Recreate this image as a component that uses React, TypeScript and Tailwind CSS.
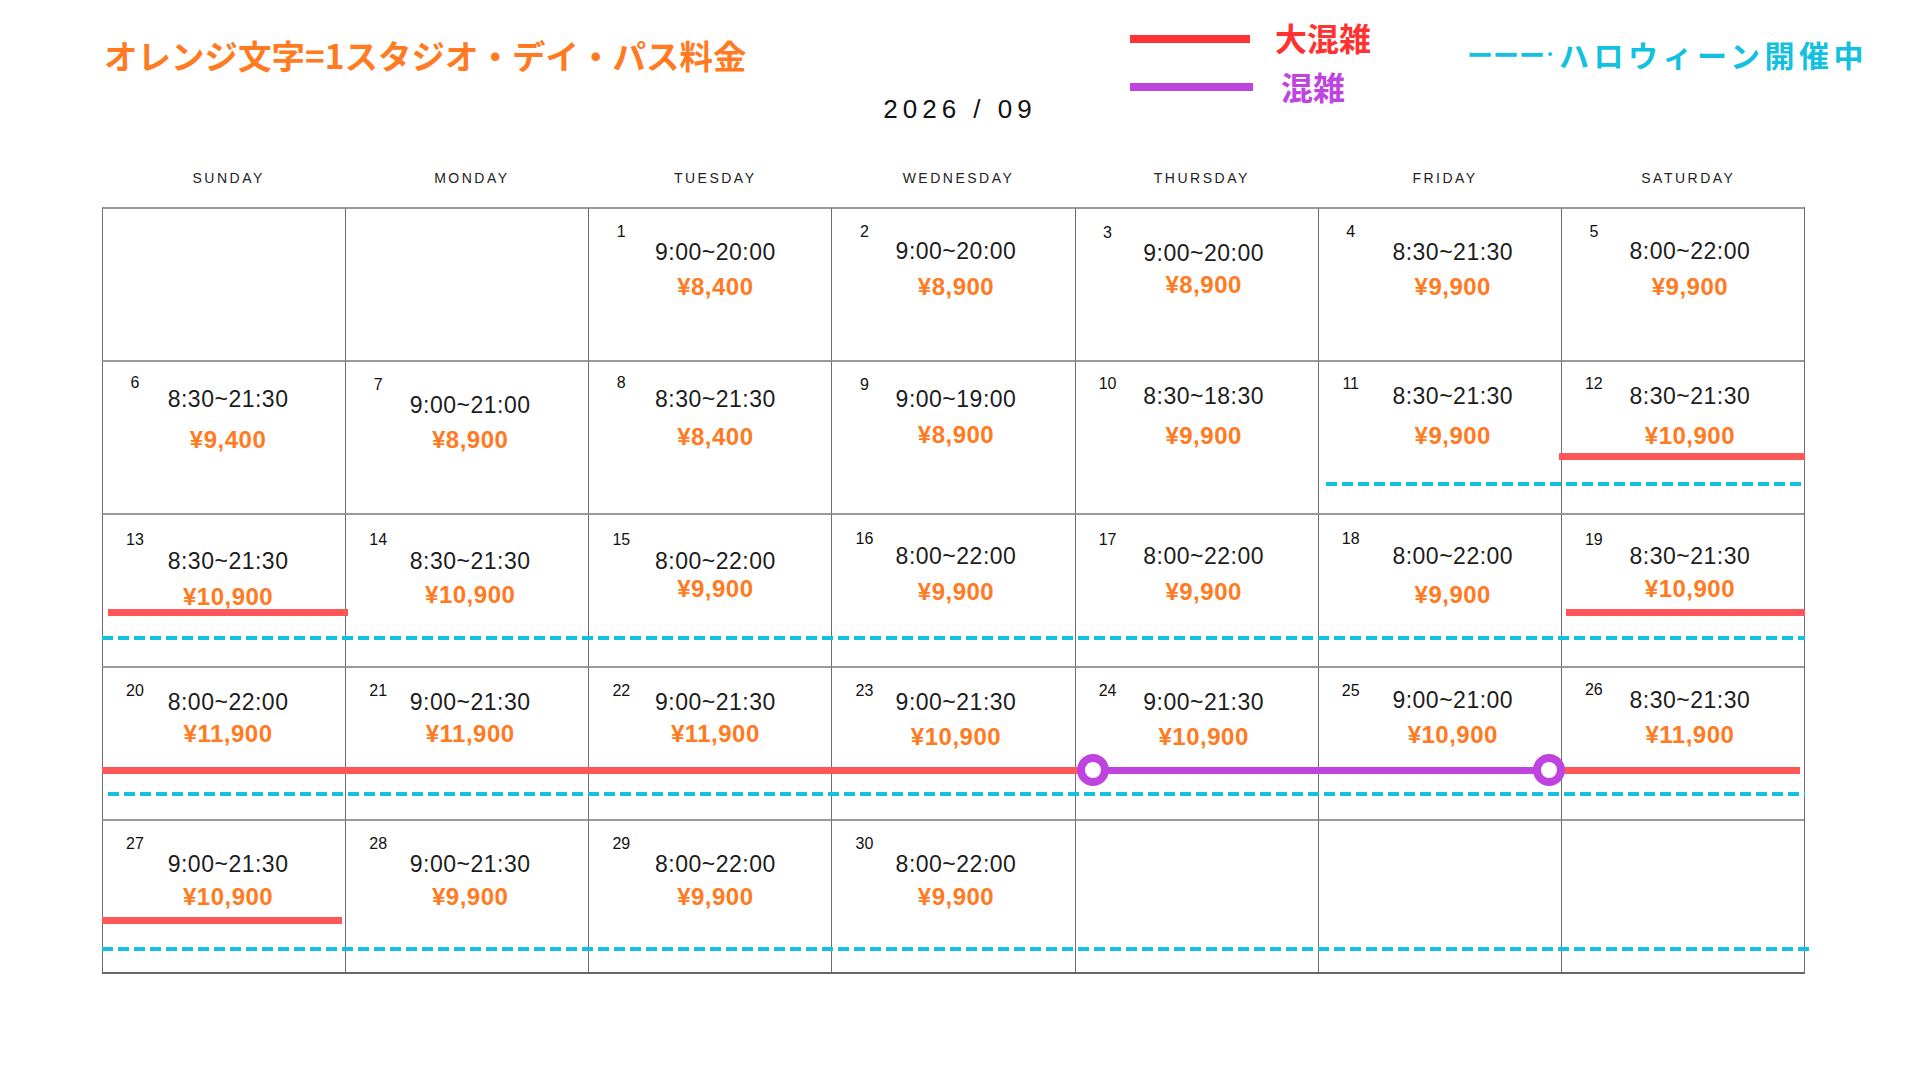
type Day = {
  d: number;
  time: string;
  price: string;
  pt: string;
  tm: string;
  pm: string;
};

const mk = (d: number, time: string, price: string, pt: string, tm: string, pm: string): Day => ({
  d,
  time,
  price,
  pt,
  tm,
  pm,
});

const weeks: (Day | null)[][] = [
  [
    null,
    null,
    mk(1, '9:00~20:00', '¥8,400', 'pt-[16px]', 'mt-[3px]', 'mt-[11px]'),
    mk(2, '9:00~20:00', '¥8,900', 'pt-[16px]', 'mt-[2px]', 'mt-[12px]'),
    mk(3, '9:00~20:00', '¥8,900', 'pt-[17px]', 'mt-[3px]', 'mt-[8px]'),
    mk(4, '8:30~21:30', '¥9,900', 'pt-[16px]', 'mt-[3px]', 'mt-[11px]'),
    mk(5, '8:00~22:00', '¥9,900', 'pt-[16px]', 'mt-[2px]', 'mt-[12px]'),
  ],
  [
    mk(6, '8:30~21:30', '¥9,400', 'pt-[14px]', 'mt-[-1px]', 'mt-[17px]'),
    mk(7, '9:00~21:00', '¥8,900', 'pt-[16px]', 'mt-[3px]', 'mt-[11px]'),
    mk(8, '8:30~21:30', '¥8,400', 'pt-[14px]', 'mt-[-1px]', 'mt-[14px]'),
    mk(9, '9:00~19:00', '¥8,900', 'pt-[16px]', 'mt-[-3px]', 'mt-[12px]'),
    mk(10, '8:30~18:30', '¥9,900', 'pt-[15px]', 'mt-[-5px]', 'mt-[16px]'),
    mk(11, '8:30~21:30', '¥9,900', 'pt-[15px]', 'mt-[-5px]', 'mt-[16px]'),
    mk(12, '8:30~21:30', '¥10,900', 'pt-[15px]', 'mt-[-5px]', 'mt-[16px]'),
  ],
  [
    mk(13, '8:30~21:30', '¥10,900', 'pt-[18px]', 'mt-[4px]', 'mt-[12px]'),
    mk(14, '8:30~21:30', '¥10,900', 'pt-[18px]', 'mt-[4px]', 'mt-[10px]'),
    mk(15, '8:00~22:00', '¥9,900', 'pt-[18px]', 'mt-[4px]', 'mt-[4px]'),
    mk(16, '8:00~22:00', '¥9,900', 'pt-[17px]', 'mt-[0px]', 'mt-[12px]'),
    mk(17, '8:00~22:00', '¥9,900', 'pt-[18px]', 'mt-[-1px]', 'mt-[12px]'),
    mk(18, '8:00~22:00', '¥9,900', 'pt-[17px]', 'mt-[0px]', 'mt-[15px]'),
    mk(19, '8:30~21:30', '¥10,900', 'pt-[18px]', 'mt-[-1px]', 'mt-[9px]'),
  ],
  [
    mk(20, '8:00~22:00', '¥11,900', 'pt-[16px]', 'mt-[-6px]', 'mt-[8px]'),
    mk(21, '9:00~21:30', '¥11,900', 'pt-[16px]', 'mt-[-6px]', 'mt-[8px]'),
    mk(22, '9:00~21:30', '¥11,900', 'pt-[16px]', 'mt-[-6px]', 'mt-[8px]'),
    mk(23, '9:00~21:30', '¥10,900', 'pt-[16px]', 'mt-[-6px]', 'mt-[11px]'),
    mk(24, '9:00~21:30', '¥10,900', 'pt-[16px]', 'mt-[-6px]', 'mt-[11px]'),
    mk(25, '9:00~21:00', '¥10,900', 'pt-[16px]', 'mt-[-8px]', 'mt-[11px]'),
    mk(26, '8:30~21:30', '¥11,900', 'pt-[15px]', 'mt-[-7px]', 'mt-[11px]'),
  ],
  [
    mk(27, '9:00~21:30', '¥10,900', 'pt-[16px]', 'mt-[3px]', 'mt-[9px]'),
    mk(28, '9:00~21:30', '¥9,900', 'pt-[16px]', 'mt-[3px]', 'mt-[9px]'),
    mk(29, '8:00~22:00', '¥9,900', 'pt-[16px]', 'mt-[3px]', 'mt-[9px]'),
    mk(30, '8:00~22:00', '¥9,900', 'pt-[16px]', 'mt-[3px]', 'mt-[9px]'),
    null,
    null,
    null,
  ],
];

const dayNames = ['SUNDAY', 'MONDAY', 'TUESDAY', 'WEDNESDAY', 'THURSDAY', 'FRIDAY', 'SATURDAY'];

// nudges the centred time/price block a little right, per column
const colShift = ['pl-[8px]', 'pl-[6px]', 'pl-[10px]', 'pl-[5px]', 'pl-[14px]', 'pl-[26px]', 'pl-[14px]'];

const RED = 'bg-[#ff5757]';
const DASH =
  'bg-[repeating-linear-gradient(90deg,#12c0df_0px,#12c0df_11px,transparent_11px,transparent_16px)]';

// overlay lines, relative to the grid's top-left corner
const bars = [
  { c: `${RED} left-[1457px] top-[246px] w-[246px] h-[7px]` },
  { c: `${DASH} left-[1224px] top-[275px] w-[479px] h-[4px]` },
  { c: `${RED} left-[6px] top-[402px] w-[240px] h-[7px]` },
  { c: `${RED} left-[1464px] top-[402px] w-[239px] h-[7px]` },
  { c: `${DASH} left-[0px] top-[429px] w-[1703px] h-[4px]` },
  { c: `${RED} left-[0px] top-[560px] w-[991px] h-[7px]` },
  { c: `bg-[#bf44df] left-[991px] top-[560px] w-[456px] h-[7px]` },
  { c: `${RED} left-[1447px] top-[560px] w-[251px] h-[7px]` },
  { c: `${DASH} left-[6px] top-[585px] w-[1697px] h-[4px]` },
  { c: `${RED} left-[0px] top-[710px] w-[240px] h-[7px]` },
  { c: `${DASH} left-[0px] top-[740px] w-[1708px] h-[4px]` },
];

const Cell = ({ day, col }: { day: Day | null; col: number }) => {
  if (!day) return <div className="h-[153px] border-l border-t-2 border-l-[#6f6f6f] border-t-[#9a9a9a]" />;
  return (
    <div className={`h-[153px] border-l border-t-2 border-l-[#6f6f6f] border-t-[#9a9a9a] flex flex-col ${day.pt}`}>
      <span className="ml-[22px] w-[20px] text-center text-[16px] leading-[13px] h-[13px] text-[#111]">{day.d}</span>
      <div className={`flex flex-col items-center ${colShift[col]}`}>
        <span className={`text-[23px] leading-[23px] tracking-[0.5px] text-[#1c1c1c] ${day.tm}`}>{day.time}</span>
        <span className={`text-[24px] leading-[24px] font-bold text-[#ff7a21] tracking-[0.5px] ${day.pm}`}>
          {day.price}
        </span>
      </div>
    </div>
  );
};

const App = () => {
  return (
    <div className="w-[1920px] h-[1080px] bg-white font-['Liberation_Sans','Noto_Sans_CJK_JP',sans-serif] overflow-hidden">
      <div className="flex h-[150px] pl-[104px]">
        <div className="w-[770px]">
          <div className="mt-[36px] text-[33.5px] leading-[38px] font-bold text-[#ff7a21] font-['Noto_Sans_CJK_JP',sans-serif] whitespace-nowrap">
            オレンジ文字=1スタジオ・デイ・パス料金
          </div>
        </div>
        <div className="w-[172px] flex justify-center">
          <div className="mt-[94px] text-[26px] leading-[30px] tracking-[5px] text-[#111] whitespace-nowrap">
            2026 / 09
          </div>
        </div>
        <div className="w-[84px]" />
        <div className="w-[337px] flex flex-col gap-[8px] pt-[19px]">
          <div className="flex items-center h-[40px]">
            <div className="w-[120px] h-[8px] bg-[#ff3333]" />
            <span className="ml-[25px] mt-[-4px] text-[32px] leading-[40px] font-bold text-[#ff3131] font-['Noto_Sans_CJK_JP',sans-serif]">
              大混雑
            </span>
          </div>
          <div className="flex items-center h-[40px]">
            <div className="w-[123px] h-[8px] bg-[#bf44df]" />
            <span className="ml-[28px] mt-[-2px] text-[32px] leading-[40px] font-bold text-[#bf44df] font-['Noto_Sans_CJK_JP',sans-serif]">
              混雑
            </span>
          </div>
        </div>
        <div className="mt-[36px] h-[36px] flex items-center whitespace-nowrap font-bold text-[#12c0df] font-['Noto_Sans_CJK_JP',sans-serif]">
          <span className="text-[26px] leading-[36px]">ーーー</span>
          <span className="text-[20px] leading-[36px] mr-[4px]">･</span>
          <span className="text-[30px] leading-[36px] tracking-[4.5px]">ハロウィーン開催中</span>
        </div>
      </div>

      <div className="ml-[102px] w-[1703px] grid grid-cols-7 h-[57px] pt-[18px]">
        {dayNames.map((n) => (
          <div key={n} className="pl-[10px] text-center text-[14px] leading-[20px] tracking-[2.5px] text-[#222]">
            {n}
          </div>
        ))}
      </div>

      <div className="relative ml-[102px] w-[1703px] grid grid-cols-7 border-r border-b-2 border-r-[#6f6f6f] border-b-[#666]">
        {weeks.map((w, wi) => w.map((day, ci) => <Cell key={`${wi}-${ci}`} day={day} col={ci} />))}
        {bars.map((b, i) => (
          <div key={i} className={`absolute ${b.c}`} />
        ))}
        <div className="absolute left-[975px] top-[547px] w-[32px] h-[32px] rounded-full border-[8px] border-[#bf44df] bg-white" />
        <div className="absolute left-[1431px] top-[547px] w-[32px] h-[32px] rounded-full border-[8px] border-[#bf44df] bg-white" />
      </div>
    </div>
  );
};

export default App;
